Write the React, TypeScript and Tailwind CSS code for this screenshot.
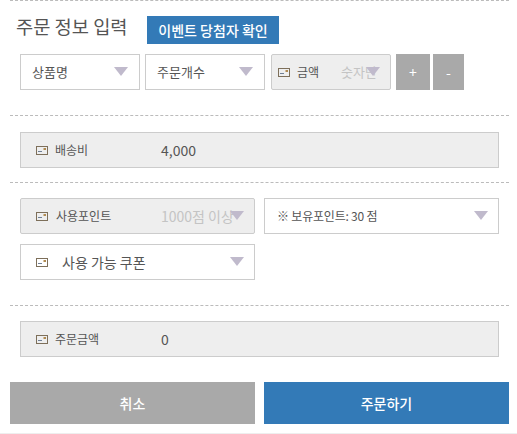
const font = { fontFamily: '"Noto Sans CJK KR", "Noto Sans", sans-serif' };

function Arrow({ className = "right-[10px]" }: { className?: string }) {
  return (
    <svg
      viewBox="0 0 14 9"
      className={`absolute top-1/2 -mt-[5px] h-[9px] w-[14px] ${className}`}
    >
      <polygon points="0,0 14,0 7,9" fill="#c0bacc" />
    </svg>
  );
}

function WonIcon() {
  return (
    <svg viewBox="0 0 12 9" className="h-[9px] w-[12px] shrink-0">
      <rect x="0.5" y="0.5" width="11" height="8" fill="none" stroke="#7d6f5a" strokeWidth="1" />
      <rect x="2" y="5" width="4" height="1" fill="#6f7f95" />
      <rect x="7.5" y="2" width="2.5" height="2" fill="#b08a50" />
    </svg>
  );
}

function Select({ label, className }: { label: string; className: string }) {
  return (
    <div
      className={`relative flex h-9 items-center border border-[#cccccc] bg-white pl-[11px] text-[13px] text-[#555555] ${className}`}
    >
      {label}
      <Arrow className="right-[11px]" />
    </div>
  );
}

function Readonly({ label, value }: { label: string; value: string }) {
  return (
    <div className="mx-[10px] flex h-9 items-center border border-[#cccccc] bg-[#eeeeee] pl-[15px] text-[#555555]">
      <WonIcon />
      <span className="ml-[7px] w-[106px] text-xs">{label}</span>
      <span className="text-sm">{value}</span>
    </div>
  );
}

export default function App() {
  return (
    <div className="h-[434px] w-[517px] overflow-hidden bg-white" style={font}>
      <div className="w-[499px] ml-[10px] border-t border-dashed border-[#bbbbbb]">
        <div className="flex h-[53px] items-start pt-[15px]">
          <h2 className="ml-[6px] w-[110px] text-[18.7px] leading-[20px] font-normal whitespace-nowrap text-[#555555]">
            주문 정보 입력
          </h2>
          <button className="ml-[21px] h-[28px] w-[132px] bg-[#337ab7] text-sm font-medium text-white">
            이벤트 당첨자 확인
          </button>
        </div>
        <div className="flex h-[62px] items-start border-b border-dashed border-[#bbbbbb] pl-[10px]">
          <Select label="상품명" className="w-[120px]" />
          <Select label="주문개수" className="ml-[5px] w-[120px]" />
          <div className="relative ml-[6px] flex h-9 w-[120px] items-center rounded-[2px] border border-[#cccccc] bg-[#eeeeee] pl-[6px] text-[#555555]">
            <WonIcon />
            <span className="ml-[7px] text-xs">금액</span>
            <span className="ml-[22px] text-[13px] text-[#c4c4c4]">숫자만</span>
            <Arrow />
          </div>
          <button className="ml-[5px] h-9 w-[34px] bg-[#a9a9a9] text-sm text-white">+</button>
          <button className="ml-[3px] h-9 w-[31px] bg-[#a9a9a9] text-sm text-white">-</button>
        </div>

        <div className="h-[67px] border-b border-dashed border-[#bbbbbb] pt-4">
          <Readonly label="배송비" value="4,000" />
        </div>

        <div className="h-[123px] border-b border-dashed border-[#bbbbbb] pt-[15px]">
          <div className="flex pl-[10px]">
            <div className="relative flex h-9 w-[235px] items-center rounded-[2px] border border-[#cccccc] bg-[#eeeeee] pl-[15px] text-[#555555]">
              <WonIcon />
              <span className="ml-[8px] w-[105px] text-xs">사용포인트</span>
              <span className="text-sm whitespace-nowrap text-[#c4c4c4]">1000점 이상</span>
              <Arrow />
            </div>
            <div className="relative ml-[9px] flex h-9 w-[235px] items-center border border-[#cccccc] bg-white pl-[12px] text-xs tracking-[-0.2px] text-[#555555]">
              ※ 보유포인트: 30 점
              <Arrow />
            </div>
          </div>
          <div className="relative mt-[10px] ml-[10px] flex h-9 w-[235px] items-center border border-[#cccccc] bg-white pl-[15px] text-sm text-[#555555]">
            <WonIcon />
            <span className="ml-[14px]">사용 가능 쿠폰</span>
            <Arrow />
          </div>
        </div>

        <div className="pt-[15px]">
          <Readonly label="주문금액" value="0" />
        </div>

        <div className="mt-[25px] flex gap-[9px]">
          <button className="h-[42px] w-[245px] bg-[#a9a9a9] text-sm font-medium text-white">취소</button>
          <button className="h-[42px] w-[245px] bg-[#337ab7] text-sm font-medium text-white">주문하기</button>
        </div>
      </div>
      <div className="mt-[9px] h-px bg-[#eeeeee]" />
    </div>
  );
}
